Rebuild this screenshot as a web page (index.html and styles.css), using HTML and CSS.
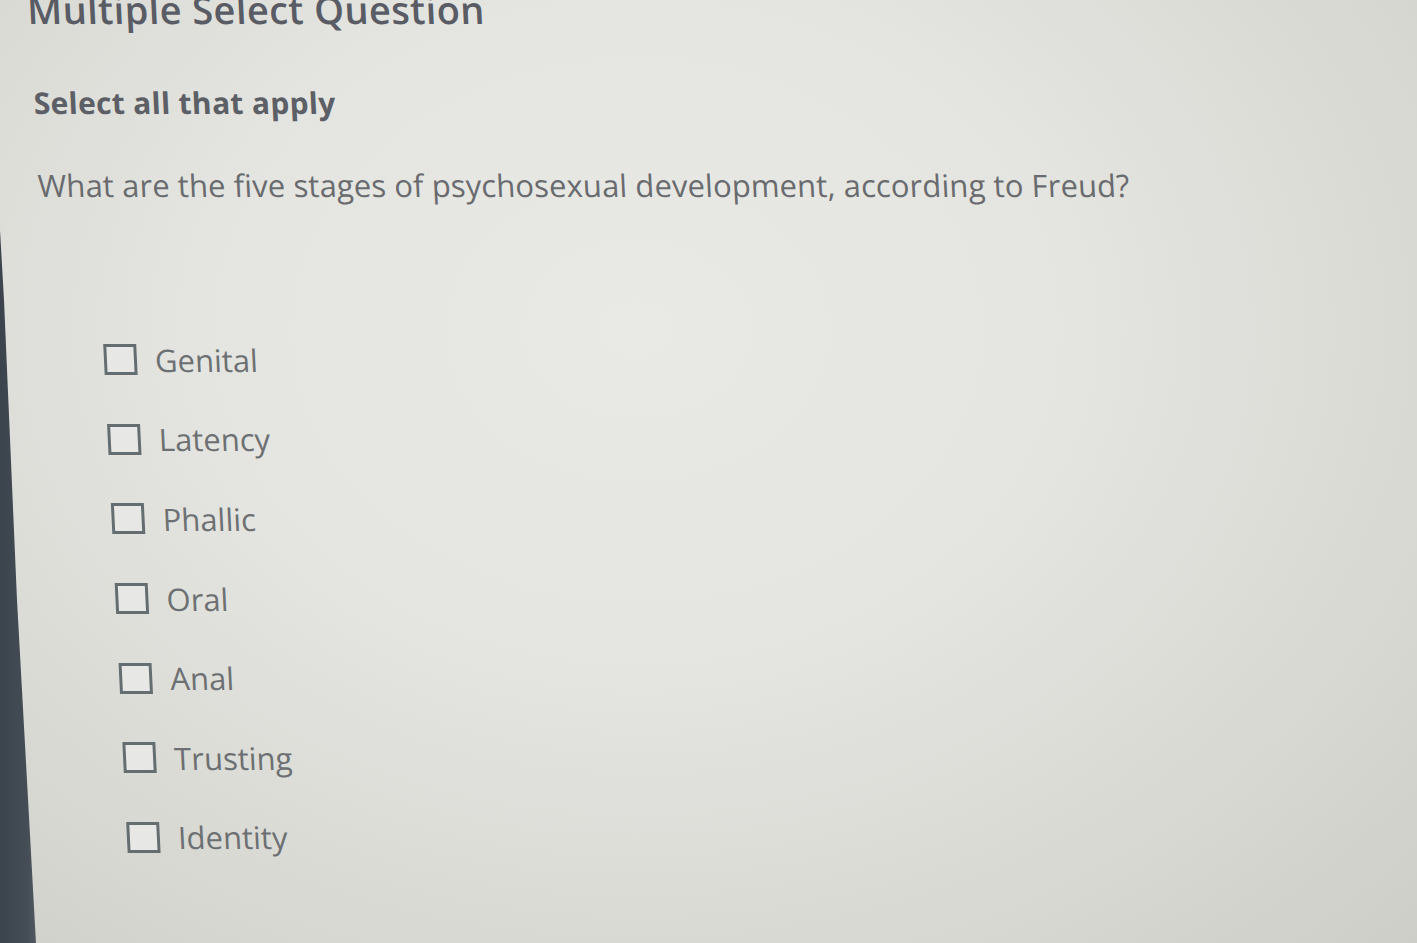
FILE: index.html
```html
<!DOCTYPE html>
<html lang="en">
<head>
    <meta charset="UTF-8">
    <meta name="viewport" content="width=device-width, initial-scale=1.0">
    <title>Multiple Select Question</title>
    <link rel="stylesheet" href="styles.css">
</head>
<body>
    <div class="screen-edge"></div>
    <div class="page">
        <div class="question-card">
            <h1 class="question-type">Multiple Select Question</h1>
            <p class="instructions">Select all that apply</p>
            <p class="prompt">What are the five stages of psychosexual development, according to Freud?</p>

            <ul class="choices">
                <li class="choice"><span class="checkbox"></span><span class="choice-label">Genital</span></li>
                <li class="choice"><span class="checkbox"></span><span class="choice-label">Latency</span></li>
                <li class="choice"><span class="checkbox"></span><span class="choice-label">Phallic</span></li>
                <li class="choice"><span class="checkbox"></span><span class="choice-label">Oral</span></li>
                <li class="choice"><span class="checkbox"></span><span class="choice-label">Anal</span></li>
                <li class="choice"><span class="checkbox"></span><span class="choice-label">Trusting</span></li>
                <li class="choice"><span class="checkbox"></span><span class="choice-label">Identity</span></li>
            </ul>
        </div>
    </div>
</body>
</html>
```

FILE: styles.css
```css
html, body {
    height: 100%;
}

body {
    font-family: "Open Sans", "Liberation Sans", sans-serif;
    margin: 0;
    overflow: hidden;
    position: relative;
    background:
        radial-gradient(ellipse at 45% 35%, #e9eae6 0%, #e4e5e0 40%, #d7d8d2 75%, #cdcec7 100%);
}

/* dark bezel showing along the left edge of the photo */
.screen-edge {
    position: absolute;
    left: 0;
    top: 0;
    width: 40px;
    height: 100%;
    background: linear-gradient(90deg, #3b434c 0%, #454d57 70%, #5a5f68 100%);
    clip-path: polygon(0 230px, 4px 300px, 17px 600px, 36px 943px, 0 943px);
}

.page {
    padding-left: 28px;
}

.question-card {
    transform: skewX(2.75deg);
    transform-origin: 0 0;
}

.question-type {
    margin: -14px 0 0 -2px;
    font-size: 38px;
    line-height: 46px;
    font-weight: 600;
    letter-spacing: 0.4px;
    color: #5a5c65;
}

.instructions {
    margin: 52px 0 0;
    font-size: 30px;
    line-height: 38px;
    font-weight: 700;
    letter-spacing: 0.3px;
    color: #5d5f66;
}

.prompt {
    margin: 43px 0 0;
    font-size: 31px;
    line-height: 40px;
    letter-spacing: 0.1px;
    color: #696b6f;
}

.choices {
    list-style: none;
    margin: 115px 0 0;
    padding: 0 0 0 58px;
}

.choice {
    display: flex;
    align-items: center;
    gap: 18px;
    height: 79.6px;
}

.checkbox {
    width: 27px;
    height: 25px;
    border: 3px solid #646d70;
    background-color: #e7e8e5;
    flex-shrink: 0;
}

.choice-label {
    font-size: 31px;
    color: #6d7073;
}
```
